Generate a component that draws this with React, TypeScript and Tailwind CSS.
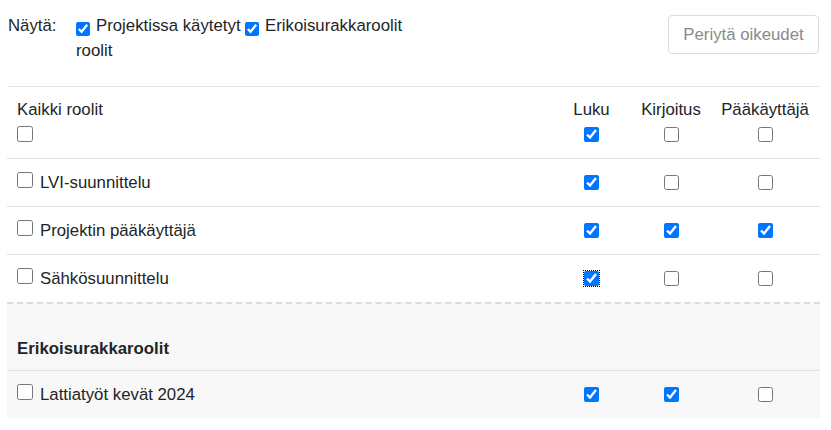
import { useState } from "react";

type Role = { name: string; read: boolean; write: boolean; admin: boolean; focus?: boolean };

const roles: Role[] = [
  { name: "LVI-suunnittelu", read: true, write: false, admin: false },
  { name: "Projektin pääkäyttäjä", read: true, write: true, admin: true },
  { name: "Sähkösuunnittelu", read: true, write: false, admin: false, focus: true },
];

const specialRoles: Role[] = [{ name: "Lattiatyöt kevät 2024", read: true, write: true, admin: false }];

function Box({ checked, size = "w-[15px] h-[15px]", focus }: { checked: boolean; size?: string; focus?: boolean }) {
  const [on, setOn] = useState(checked);
  return (
    <input
      type="checkbox"
      checked={on}
      onChange={() => setOn(!on)}
      className={`${size} m-0 align-middle ${focus ? "outline outline-1 outline-dotted outline-black" : ""}`}
    />
  );
}

function RoleRow({ role, shaded }: { role: Role; shaded?: boolean }) {
  return (
    <div
      className={`grid h-[48px] grid-cols-[1fr_81px_78px_110px] items-center border-t border-[#dee2e6] ${shaded ? "bg-[#f8f8f8]" : ""}`}
    >
      <label className="flex items-center gap-[7px] pl-[10px]">
        <span className="-mt-[5px] flex">
          <Box checked={false} size="w-[16px] h-[16px]" />
        </span>
        <span>{role.name}</span>
      </label>
      <div className="flex justify-center">
        <Box checked={role.read} focus={role.focus} />
      </div>
      <div className="flex justify-center">
        <Box checked={role.write} />
      </div>
      <div className="flex justify-center">
        <Box checked={role.admin} />
      </div>
    </div>
  );
}

export default function App() {
  return (
    <div className="h-[430px] w-[831px] bg-white text-[16.8px] leading-[24px] text-[#212529]" style={{ fontFamily: '"Liberation Sans", Arial, sans-serif' }}>
      <div className="flex items-start justify-between pl-[8px] pr-[12px] pt-[14px]">
        <div className="flex items-start leading-[23px]">
          <span className="w-[68px]">Näytä:</span>
          <label className="w-[169px]">
            <span className="mr-[6px] inline-block align-[-2px]">
              <Box checked size="w-[14px] h-[14px]" />
            </span>
            Projektissa käytetyt roolit
          </label>
          <label className="whitespace-nowrap">
            <span className="mr-[6px] inline-block align-[-2px]">
              <Box checked size="w-[14px] h-[14px]" />
            </span>
            Erikoisurakkaroolit
          </label>
        </div>
        <button
          type="button"
          className="mt-[1px] h-[39px] w-[151px] rounded-[4px] border border-[#dcdcdc] text-[#8a8a8a]"
        >
          Periytä oikeudet
        </button>
      </div>

      <div className="mx-[7px] mt-[24px] w-[813px]">
        <div className="grid grid-cols-[1fr_81px_78px_110px] border-t border-[#e6e6e6] pt-[11px] pb-[16px]">
          <div className="pl-[10px]">
            <div>Kaikki roolit</div>
            <div className="mt-[4px] flex">
              <Box checked={false} size="w-[16px] h-[16px]" />
            </div>
          </div>
          <div className="flex flex-col items-center">
            <div>Luku</div>
            <div className="mt-[5px] flex">
              <Box checked />
            </div>
          </div>
          <div className="flex flex-col items-center">
            <div>Kirjoitus</div>
            <div className="mt-[5px] flex">
              <Box checked={false} />
            </div>
          </div>
          <div className="flex flex-col items-center">
            <div>Pääkäyttäjä</div>
            <div className="mt-[5px] flex">
              <Box checked={false} />
            </div>
          </div>
        </div>

        {roles.map((r) => (
          <RoleRow key={r.name} role={r} />
        ))}

        <div className="h-[68px] border-t-2 border-dashed border-[#dcdcdc] bg-[#f8f8f8] pl-[10px] pt-[33px] font-bold">
          Erikoisurakkaroolit
        </div>

        {specialRoles.map((r) => (
          <RoleRow key={r.name} role={r} shaded />
        ))}
      </div>
    </div>
  );
}
